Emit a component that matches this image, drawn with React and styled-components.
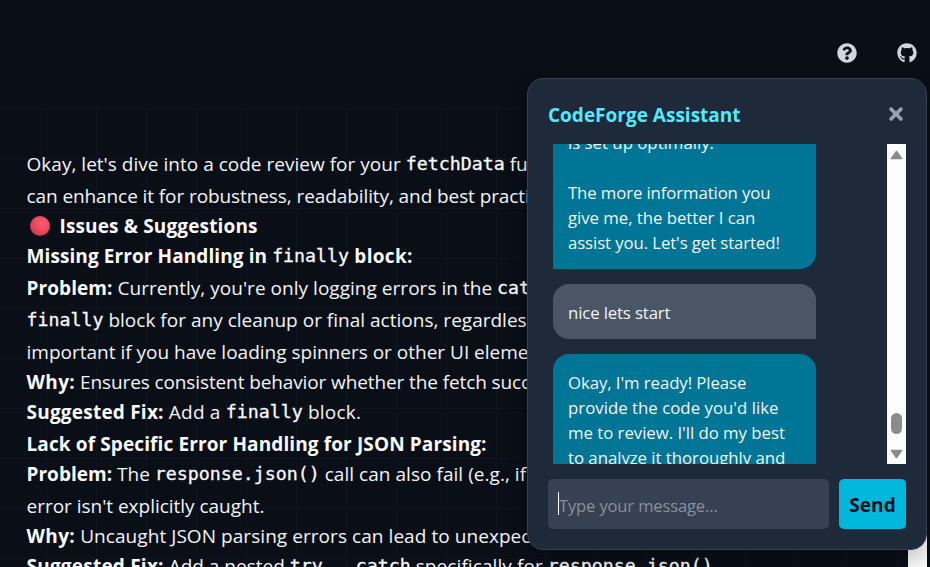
import React from 'react';
import styled, { createGlobalStyle } from 'styled-components';
import { FaGithub, FaQuestionCircle, FaTimes } from 'react-icons/fa';

const GlobalStyle = createGlobalStyle`
  * { box-sizing: border-box; }
  body {
    margin: 0;
    overflow: hidden;
    background: #0a0e17;
    color: #f3f4f6;
    font-family: "Open Sans", "Noto Sans", sans-serif;
  }
`;

const Page = styled.div`
  display: flex;
  flex-direction: column;
  height: 567px;
  overflow: hidden;
`;

const Header = styled.header`
  display: flex;
  flex: none;
  justify-content: flex-end;
  align-items: center;
  gap: 40px;
  height: 108px;
  padding: 0 13px 2px 0;
  color: #d1d5dc;
  font-size: 20px;

  svg { display: block; }
`;

const Body = styled.div`
  display: flex;
  flex: 1;
  min-height: 0;
  padding-right: 3px;
`;

const Review = styled.main`
  flex: 1;
  min-width: 0;
  padding: 41px 0 0 26.5px;
  overflow: hidden;
  font-size: 19px;
  line-height: 30px;
  background-image:
    linear-gradient(#0e1321 1px, transparent 1px),
    linear-gradient(90deg, #0e1321 1px, transparent 1px);
  background-size: 50px 50px;
  background-position: 46px 0;
`;

const PageTrack = styled.div`
  flex: none;
  width: 19px;
  background: #fcfcfc;
`;

const Line = styled.div`
  display: flex;
  align-items: center;
  height: 30px;
  margin-top: ${(p) => (p.$loose ? 2 : 0)}px;
  white-space: pre;
`;

const Text = styled.span`
  letter-spacing: ${(p) => p.$track || 0}px;
`;

const Strong = styled.strong`
  font-weight: 700;
  color: #fafafa;
  letter-spacing: ${(p) => p.$track || 0}px;
`;

const Code = styled.code`
  font-family: "DejaVu Sans Mono", monospace;
  font-size: 18.27px;
  color: #f8f8f8;
  -webkit-text-stroke: 0.3px #f8f8f8;
`;

const RedDot = styled.span`
  width: 20px;
  height: 20px;
  margin: 0 9.5px 0 3.5px;
  border-radius: 50%;
  background: radial-gradient(circle at 62% 36%, #ff5c78 0%, #f04a62 40%, #cd3c50 72%, #a84050 100%);
`;

const Panel = styled.aside`
  position: absolute;
  top: 78px;
  left: 527px;
  width: 400px;
  height: 472px;
  display: flex;
  flex-direction: column;
  padding: 20px;
  border: 1px solid #364153;
  border-radius: 16px;
  background: #1e2939;
  box-shadow: 0 10px 20px rgba(0, 0, 0, 0.22);
`;

const PanelHeader = styled.div`
  display: flex;
  flex: none;
  align-items: center;
  justify-content: space-between;
  height: 30px;
  margin-bottom: 15px;
`;

const Title = styled.h3`
  margin: 0;
  padding-top: 2px;
  color: #53eafd;
  font-size: 19px;
  font-weight: 700;
  line-height: 30px;
`;

const CloseButton = styled.button`
  display: flex;
  padding: 0;
  border: 0;
  background: none;
  color: #99a1af;
  font-size: 20px;
`;

const ChatArea = styled.div`
  display: flex;
  flex: none;
  height: 320px;
  overflow: hidden;
`;

const Messages = styled.div`
  display: flex;
  flex: 1;
  flex-direction: column;
  gap: 15px;
  padding-left: 5px;
`;

const Bubble = styled.div`
  flex: none;
  width: 263px;
  padding: 16px 15px 14px;
  font-size: 16.8px;
  line-height: 25px;
  white-space: pre;
  color: #f3f4f6;
  background: ${(p) => (p.$from === 'user' ? '#4a5565' : '#007595')};
  border-radius: ${(p) => (p.$from === 'user' ? '16px 16px 0 16px' : '16px 16px 16px 0')};
`;

const ScrolledBubble = styled(Bubble)`
  margin-top: -30px;
`;

const BubbleLine = styled.div`
  height: 25px;
  letter-spacing: ${(p) => p.$track || 0}px;
`;

const Scrollbar = styled.div`
  display: flex;
  flex: none;
  flex-direction: column;
  align-items: center;
  width: 19px;
  padding: 6px 0 5px;
  background: #fcfcfc;

  svg { display: block; flex: none; }
`;

const Thumb = styled.div`
  width: 11px;
  height: 21px;
  margin: auto 0 15px;
  border-radius: 6px;
  background: #8b8b8b;
`;

const Composer = styled.form`
  display: flex;
  gap: 10px;
  margin-top: 15px;
  height: 50px;
`;

const Field = styled.div`
  display: flex;
  align-items: center;
  width: 281px;
  padding: 3px 10px 0;
  border-radius: 5px;
  background: #364153;
  color: #8b919b;
  font-size: 16.5px;
  letter-spacing: -0.12px;
`;

const Caret = styled.span`
  width: 1px;
  height: 23px;
  margin-top: -5px;
  background: #fff;
`;

const SendButton = styled.button`
  flex: 1;
  padding: 2px 0 0;
  border: 0;
  border-radius: 5px;
  background: #00b8db;
  color: #0a0e17;
  font: 700 19px "Open Sans", sans-serif;
  letter-spacing: 0.1px;
`;

function Arrow({ down }) {
  const d = down ? 'M1.5 1.5H11.5L6.5 8.5Z' : 'M1.5 8.5H11.5L6.5 1.5Z';
  return (
    <svg width="13" height="10" viewBox="0 0 13 10">
      <path d={d} fill="#8b8b8b" stroke="#8b8b8b" strokeWidth="1.6" strokeLinejoin="round" />
    </svg>
  );
}

function CodeReview() {
  return (
    <Review>
      <Line><Text $track={0.02}>Okay, let's dive into a code review for your </Text><Code>fetchData</Code><Text> function and how we</Text></Line>
      <Line $loose><Text $track={-0.09}>can enhance it for robustness, readability, and best practices.</Text></Line>
      <Line><RedDot role="img" aria-label="Red circle" /><Strong $track={0.14}>Issues &amp; Suggestions</Strong></Line>
      <Line><Strong $track={0.09}>Missing Error Handling in </Strong><Code>finally</Code><Strong $track={0.3}> block:</Strong></Line>
      <Line $loose><Strong $track={0.07}>Problem:</Strong><Text $track={0.03}> Currently, you're only logging errors in the </Text><Code>catch</Code></Line>
      <Line $loose><Code>finally</Code><Text $track={0.01}> block for any cleanup or final actions, regardless of</Text></Line>
      <Line $loose><Text>important if you have loading spinners or other UI elements.</Text></Line>
      <Line><Strong $track={0.4}>Why:</Strong><Text $track={-0.11}> Ensures consistent behavior whether the fetch succeeds</Text></Line>
      <Line><Strong $track={0.22}>Suggested Fix:</Strong><Text $track={0.2}> Add a </Text><Code>finally</Code><Text $track={0.22}> block.</Text></Line>
      <Line $loose><Strong $track={0.12}>Lack of Specific Error Handling for JSON Parsing:</Strong></Line>
      <Line><Strong $track={0.02}>Problem:</Strong><Text> The </Text><Code>response.json()</Code><Text $track={0.04}> call can also fail (e.g., if the</Text></Line>
      <Line $loose><Text $track={-0.02}>error isn't explicitly caught.</Text></Line>
      <Line><Strong $track={0.4}>Why:</Strong><Text $track={0.06}> Uncaught JSON parsing errors can lead to unexpected</Text></Line>
      <Line><Strong $track={0.22}>Suggested Fix:</Strong><Text> Add a nested </Text><Code>try...catch</Code><Text $track={0.08}> specifically for </Text><Code>response.json()</Code></Line>
    </Review>
  );
}

function Assistant() {
  return (
    <Panel>
      <PanelHeader>
        <Title>CodeForge Assistant</Title>
        <CloseButton aria-label="Close"><FaTimes /></CloseButton>
      </PanelHeader>
      <ChatArea>
        <Messages>
          <ScrolledBubble $from="bot">
            <BubbleLine>is set up optimally.</BubbleLine>
            <BubbleLine />
            <BubbleLine $track={-0.12}>The more information you</BubbleLine>
            <BubbleLine $track={-0.04}>give me, the better I can</BubbleLine>
            <BubbleLine $track={-0.1}>assist you. Let's get started!</BubbleLine>
          </ScrolledBubble>
          <Bubble $from="user">
            <BubbleLine $track={-0.14}>nice lets start</BubbleLine>
          </Bubble>
          <Bubble $from="bot">
            <BubbleLine $track={-0.08}>Okay, I'm ready! Please</BubbleLine>
            <BubbleLine $track={0.02}>provide the code you'd like</BubbleLine>
            <BubbleLine $track={-0.03}>me to review. I'll do my best</BubbleLine>
            <BubbleLine $track={-0.03}>to analyze it thoroughly and</BubbleLine>
          </Bubble>
        </Messages>
        <Scrollbar>
          <Arrow />
          <Thumb />
          <Arrow down />
        </Scrollbar>
      </ChatArea>
      <Composer>
        <Field><Caret />Type your message...</Field>
        <SendButton type="button">Send</SendButton>
      </Composer>
    </Panel>
  );
}

export default function App() {
  return (
    <Page>
      <GlobalStyle />
      <Header>
        <FaQuestionCircle />
        <FaGithub />
      </Header>
      <Body>
        <CodeReview />
        <PageTrack />
      </Body>
      <Assistant />
    </Page>
  );
}
